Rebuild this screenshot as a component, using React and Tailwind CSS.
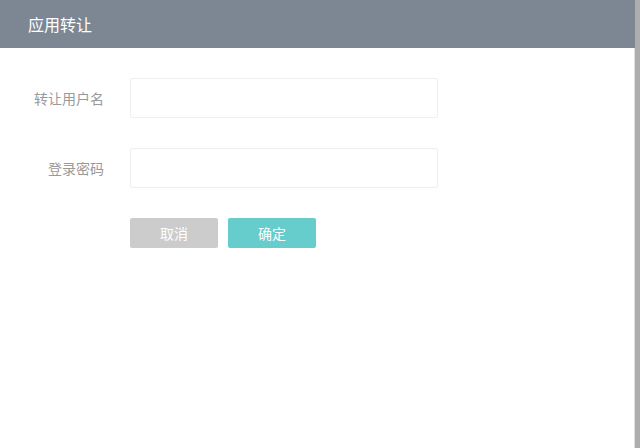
export default function App() {
  const font = { fontFamily: '"Noto Sans CJK SC", "Noto Sans", sans-serif' };
  return (
    <div className="flex h-[448px] w-[640px] bg-white" style={font}>
      <div className="flex flex-1 flex-col">
        <div className="flex h-[48px] items-center bg-[#7d8693] pl-[28px] text-[16px] text-white">
          应用转让
        </div>
        <div className="flex flex-1 flex-col gap-[30px] border-r border-[#dedede] pt-[30px]">
          <div className="flex items-center">
            <div className="w-[104px] text-right text-[14px] text-[#999]">转让用户名</div>
            <input className="ml-[26px] h-[40px] w-[308px] rounded-[2px] border border-[#eeeeee] outline-none" />
          </div>
          <div className="flex items-center">
            <div className="w-[104px] text-right text-[14px] text-[#999]">登录密码</div>
            <input type="password" className="ml-[26px] h-[40px] w-[308px] rounded-[2px] border border-[#eeeeee] outline-none" />
          </div>
          <div className="ml-[130px] flex gap-[10px]">
            <button className="h-[30px] w-[88px] rounded-[2px] bg-[#cccccc] text-[14px] text-white">取消</button>
            <button className="h-[30px] w-[88px] rounded-[2px] bg-[#66cccc] text-[14px] text-white">确定</button>
          </div>
        </div>
      </div>
      <div className="w-[5px] bg-[#adadad]" />
    </div>
  );
}
